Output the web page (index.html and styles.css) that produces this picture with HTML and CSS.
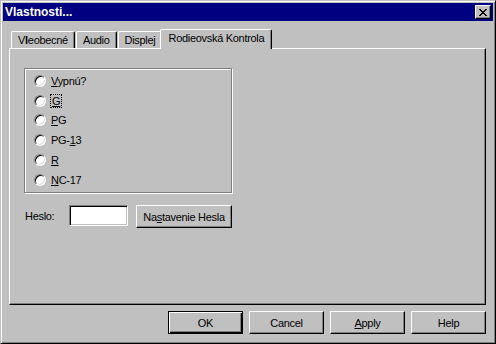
FILE: index.html
```html
<!DOCTYPE html>
<html lang="sk">
<head>
    <meta charset="UTF-8">
    <title>Vlastnosti...</title>
    <link rel="stylesheet" href="styles.css">
</head>
<body>
    <div class="window">
        <div class="title-bar">
            <span class="title">Vlastnosti...</span>
            <button class="close-btn" aria-label="Zavrieť">
                <svg width="8" height="7" viewBox="0 0 8 7" shape-rendering="crispEdges">
                    <path fill="#000" d="M0 0h2v1h-2zM6 0h2v1h-2zM1 1h2v1h-2zM5 1h2v1h-2zM2 2h4v1h-4zM3 3h2v1h-2zM2 4h4v1h-4zM1 5h2v1h-2zM5 5h2v1h-2zM0 6h2v1h-2zM6 6h2v1h-2z"/>
                </svg>
            </button>
        </div>

        <div class="dialog-body">
            <div class="tabs">
                <div class="tab">V<b class="bad-glyph">l</b>eobecné</div>
                <div class="tab">Audio</div>
                <div class="tab">Displej</div>
                <div class="tab active">Rodieovská Kontrola</div>
            </div>

            <div class="panel">
                <div class="group">
                    <label class="radio-row"><span class="radio"></span><span><u>V</u>ypnú?</span></label>
                    <label class="radio-row"><span class="radio"></span><span class="focus"><u>G</u></span></label>
                    <label class="radio-row"><span class="radio"></span><span><u>P</u>G</span></label>
                    <label class="radio-row"><span class="radio"></span><span>PG-<u>1</u>3</span></label>
                    <label class="radio-row"><span class="radio"></span><span><u>R</u></span></label>
                    <label class="radio-row"><span class="radio"></span><span><u>N</u>C-17</span></label>
                </div>

                <div class="password-row">
                    <span class="password-label">Heslo:</span>
                    <span class="field"></span>
                    <button class="btn set-btn">Na<u>s</u>tavenie Hesla</button>
                </div>
            </div>

            <div class="button-row">
                <button class="btn default">OK</button>
                <button class="btn">Cancel</button>
                <button class="btn"><u>A</u>pply</button>
                <button class="btn">Help</button>
            </div>
        </div>
    </div>
</body>
</html>
```

FILE: styles.css
```css
body {
    margin: 0;
    background: #c0c0c0;
    font-family: 'Liberation Sans', Arial, sans-serif;
    font-size: 11px;
    letter-spacing: -0.3px;
    color: #000;
}

.window {
    width: 496px;
    height: 344px;
    box-sizing: border-box;
    padding: 2px;
    background: #c0c0c0;
    border: 1px solid;
    border-color: #c0c0c0 #000 #000 #c0c0c0;
    box-shadow: inset 1px 1px #fff, inset -1px -1px #808080;
}

.title-bar {
    height: 18px;
    background: #000080;
    display: flex;
    align-items: center;
    justify-content: space-between;
    padding-left: 2px;
}

.title {
    color: #fff;
    font-weight: bold;
    font-size: 12px;
    letter-spacing: 0;
}

.close-btn {
    width: 16px;
    height: 14px;
    margin-right: 2px;
    padding: 0;
    box-sizing: border-box;
    background: #c0c0c0;
    border: 1px solid;
    border-color: #fff #000 #000 #fff;
    box-shadow: inset -1px -1px #808080;
    display: flex;
    align-items: center;
    justify-content: center;
}

.dialog-body {
    padding: 8px 7px 0 6px;
}

.tabs {
    display: flex;
    align-items: flex-end;
    padding-left: 2px;
}

.tab {
    height: 17px;
    box-sizing: border-box;
    padding: 2px 6px 0 6px;
    border: 1px solid;
    border-bottom: none;
    border-color: #fff #000 #000 #fff;
    border-radius: 2px 2px 0 0;
    box-shadow: inset -1px 0 #808080;
    background: #c0c0c0;
    white-space: nowrap;
}

.tab + .tab {
    margin-left: 1px;
}

.bad-glyph {
    font-weight: bold;
}

.tab.active {
    position: relative;
    z-index: 1;
    height: 20px;
    margin: 0 0 -1px -2px;
    padding: 2px 7px 0 7px;
}

.panel {
    height: 257px;
    box-sizing: border-box;
    padding: 19px 0 0 14px;
    border: 1px solid;
    border-color: #fff #000 #000 #fff;
    box-shadow: inset -1px -1px #808080;
}

.group {
    width: 208px;
    height: 125px;
    box-sizing: border-box;
    padding: 2px 0 0 9px;
    border: 1px solid #808080;
    box-shadow: inset 1px 1px #fff, 1px 1px #fff;
    display: flex;
    flex-direction: column;
}

.radio-row {
    height: 19.8px;
    display: flex;
    align-items: center;
    gap: 5px;
}

.radio {
    width: 12px;
    height: 12px;
    box-sizing: border-box;
    border-radius: 50%;
    background: #fff;
    border: 1px solid;
    border-color: #808080 #fff #fff #808080;
    box-shadow: inset 1px 1px #000, inset -1px -1px #dfdfdf;
}

.focus {
    outline: 1px dotted #000;
    outline-offset: 0;
    padding: 0 1px;
}

u {
    text-decoration-thickness: 1px;
    text-underline-offset: 1px;
}

.password-row {
    display: flex;
    align-items: flex-start;
    margin-top: 12px;
}

.password-label {
    width: 44px;
    padding: 5px 0 0 1px;
}

.field {
    width: 59px;
    height: 21px;
    box-sizing: border-box;
    background: #fff;
    border: 1px solid;
    border-color: #808080 #fff #fff #808080;
    box-shadow: inset 1px 1px #000, inset -1px -1px #c0c0c0;
}

.btn {
    height: 23px;
    width: 75px;
    padding: 0;
    box-sizing: border-box;
    font-family: inherit;
    font-size: 11px;
    letter-spacing: -0.3px;
    color: #000;
    background: #c0c0c0;
    border: 1px solid;
    border-color: #fff #000 #000 #fff;
    box-shadow: inset -1px -1px #808080;
}

.set-btn {
    width: 96px;
    margin-left: 8px;
}

.btn.default {
    border-color: #000;
    box-shadow: inset 1px 1px #fff, inset -1px -1px #000, inset -2px -2px #808080;
}

.button-row {
    display: flex;
    justify-content: flex-end;
    gap: 6px;
    margin-top: 6px;
}
```
